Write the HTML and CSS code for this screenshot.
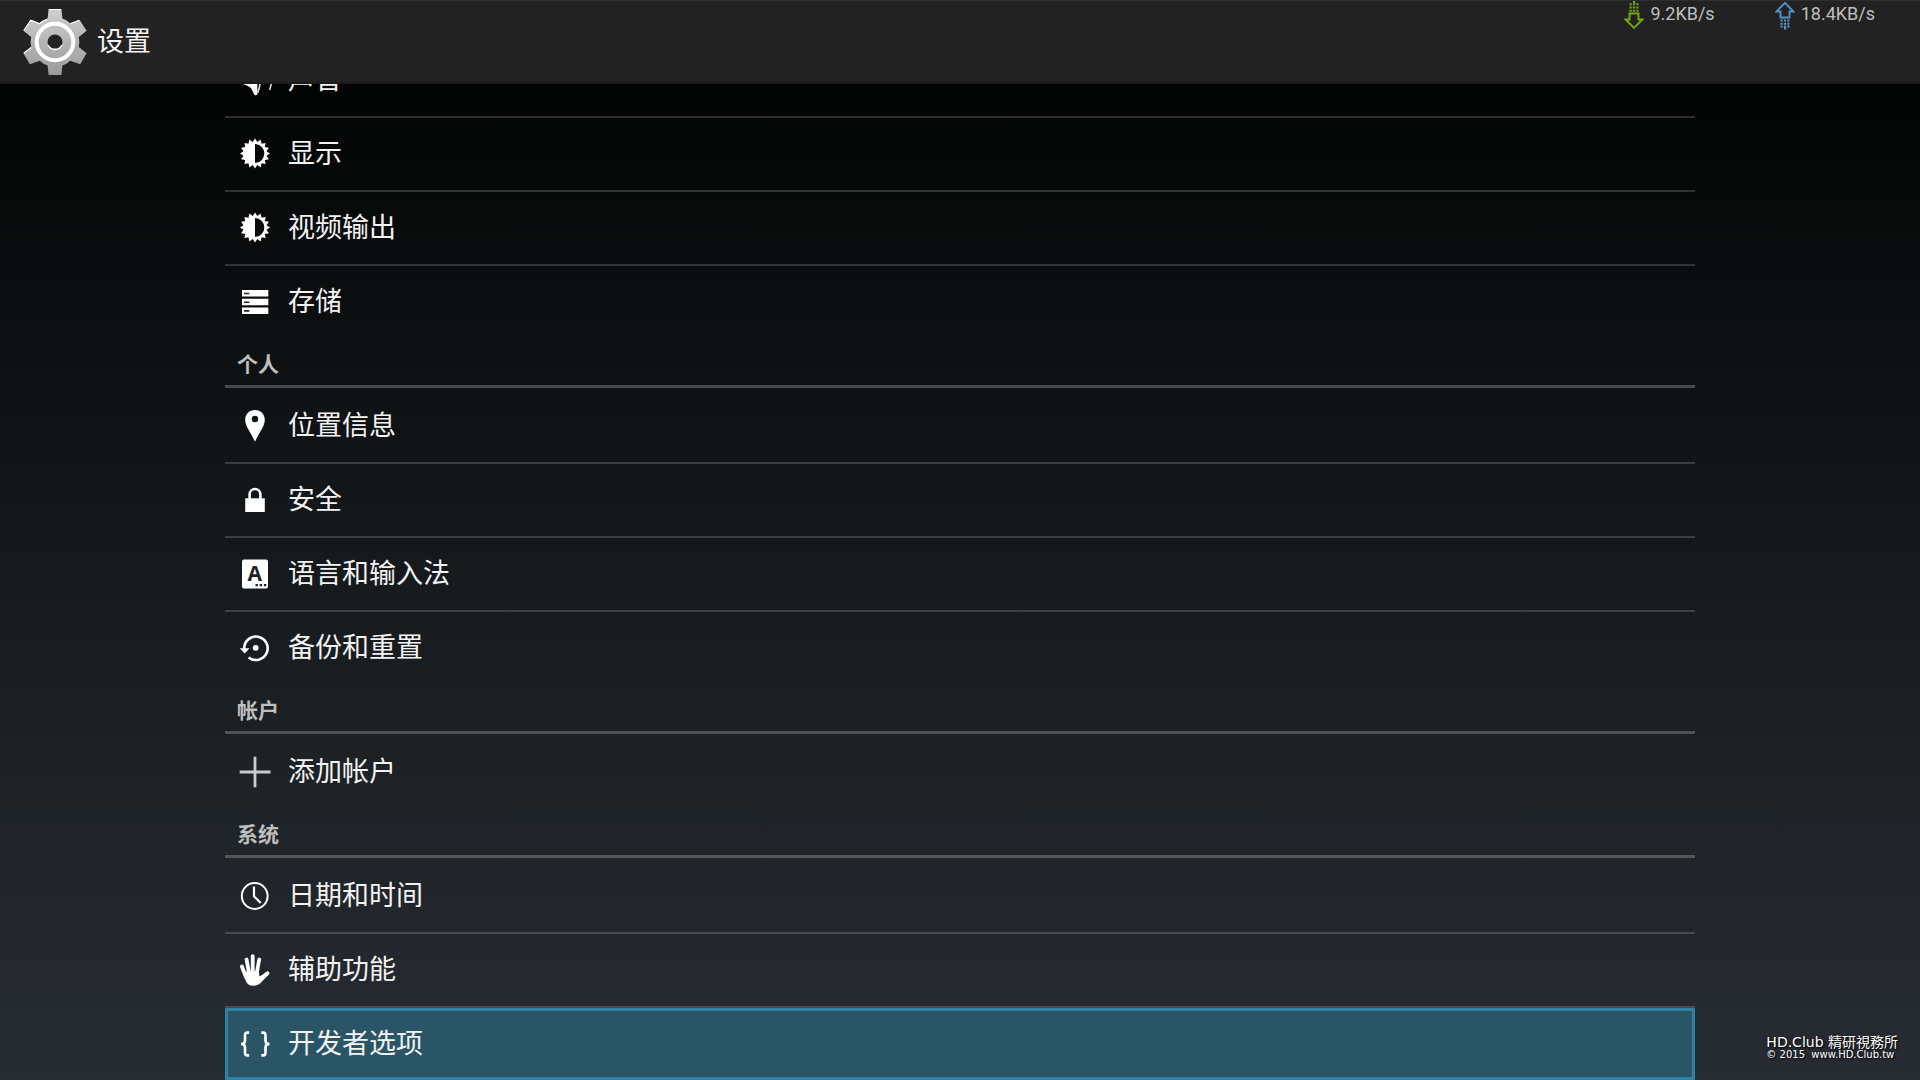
FILE: index.html
```html
<!DOCTYPE html>
<html lang="zh-CN">
<head>
<meta charset="UTF-8">
<title>设置</title>
<link rel="stylesheet" href="styles.css">
</head>
<body>
<svg class="defs" aria-hidden="true">
    <defs>
        <linearGradient id="metal" x1="0" y1="0" x2="0" y2="1">
            <stop offset="0" stop-color="#cfcfcf"/>
            <stop offset="1" stop-color="#9a9a9a"/>
        </linearGradient>
        <symbol id="brightness" viewBox="0 0 32 32">
            <path fill="#fff" fill-rule="evenodd" d="M31 15.500 27.500 17.800 29.900 21.200 25.800 22 26.600 26.100 22.500 25.300 21.700 29.400 18.300 27 16 30.500 13.700 27 10.300 29.400 9.500 25.300 5.400 26.100 6.200 22 2.100 21.200 4.500 17.800 1 15.500 4.500 13.200 2.100 9.800 6.200 9 5.400 4.900 9.500 5.700 10.300 1.600 13.700 4 16 .5 18.300 4 21.700 1.600 22.500 5.700 26.600 4.900 25.800 9 29.900 9.800 27.500 13.200ZM16 6V25A9.300 9.500 0 0 0 16 6Z"/>
        </symbol>
    </defs>
</svg>

<header class="action-bar">
    <svg class="logo" viewBox="0 0 68 68" aria-hidden="true">
        <g fill="url(#metal)">
            <path fill-rule="evenodd" d="M27.6 1H40.4L41.4 10.5Q46 12 49.3 15.2L58.5 11.8 65.6 22.7 57.8 29Q59 34 57.8 39L65.6 45.3 59.2 56.2 49.3 52.8Q46 56 41.4 57.5L40.4 67H27.6L26.6 57.5Q22 56 18.7 52.8L8.8 56.2 2.4 45.3 10.2 39Q9 34 10.2 29L2.4 22.7 9.5 11.8 18.7 15.2Q22 12 26.6 10.5ZM34 26.5A7.5 7.5 0 1 0 34 41.5 7.5 7.5 0 1 0 34 26.5Z"/>
        </g>
        <path d="M28 1.5H40M2.8 22.5 9.8 12.3 18.7 15.7Q21 13 26.6 11.2M49.3 15.7 58.2 12.3M2.8 45.3 10.2 39.5" fill="none" stroke="#fff" stroke-width="1.2"/>
        <circle cx="34" cy="34" r="18.3" fill="none" stroke="#fff" stroke-width="4"/>
        <path d="M27 37A7.8 7.8 0 0 0 41 37" fill="none" stroke="#fff" stroke-width="1.6"/>
    </svg>
    <h1 class="title">设置</h1>
    <div class="speeds">
        <span class="speed">
            <svg class="arrow" viewBox="0 0 20 30" fill="none" stroke="#77a80c" stroke-width="1.9" aria-hidden="true">
                <path d="M5.5 12.5H14.5V18.500H18.5L10 27 1.5 18.5H5.5Z"/>
                <path stroke-width="2" stroke-dasharray="2.200 1.200" d="M5.5 9.800H15M5.5 6.500H15M5.5 3.200H15M9 1H11.500"/>
            </svg>
            9.2KB/s
        </span>
        <span class="speed">
            <svg class="arrow" viewBox="0 0 20 30" fill="none" stroke="#5593c4" stroke-width="1.9" aria-hidden="true">
                <path d="M5.5 16.500H14.5V10.500H18.5L10 1.800 1.5 10.500H5.5Z"/>
                <path stroke-width="2" stroke-dasharray="2.200 1.200" d="M5.5 19.500H15M5.5 22.700H15M5.5 25.500H15M9 27.500H11.500"/>
            </svg>
            18.4KB/s
        </span>
    </div>
</header>

<main class="content">
    <ul class="list">
        <li>
            <a class="item" href="#sound">
                <svg class="icon" viewBox="0 0 32 32" aria-hidden="true">
                    <path fill="#fff" d="M4 20 2 14 9 11 15 2 18 12 18.500 28Q19 32 15.500 31L12 24 8 21.500Z"/>
                    <path fill="none" stroke="#ddd" stroke-width="1.600" d="M18 4Q24 17 18.500 29M31.500 8Q34 17 30.500 26"/>
                </svg>
                声音
            </a>
        </li>
        <li>
            <a class="item" href="#display">
                <svg class="icon" aria-hidden="true"><use href="#brightness"/></svg>
                显示
            </a>
        </li>
        <li>
            <a class="item" href="#video">
                <svg class="icon" aria-hidden="true"><use href="#brightness"/></svg>
                视频输出
            </a>
        </li>
        <li>
            <a class="item" href="#storage">
                <svg class="icon" viewBox="0 0 32 32" aria-hidden="true">
                    <path fill="#fff" d="M3 4H29.3V10.6H3ZM3 12.7H29.3V19.3H3ZM3 21.4H29.3V28H3Z"/>
                    <path stroke="#222" stroke-width="1.6" d="M5 7.5H10.3M5 16.2H10.3M5 24.9H10.3"/>
                </svg>
                存储
            </a>
        </li>
    </ul>

    <h2 class="category">个人</h2>
    <ul class="list">
        <li>
            <a class="item" href="#location">
                <svg class="icon" viewBox="0 0 32 32" aria-hidden="true">
                    <path fill="#fff" fill-rule="evenodd" d="M16 0C10.3 0 6.2 4.2 6.2 9.8 6.2 16.5 12 22.5 16 31.8 20 22.5 25.8 16.5 25.8 9.8 25.8 4.2 21.7 0 16 0ZM16 5.8A3.2 3.2 0 1 1 16 12.2 3.2 3.2 0 1 1 16 5.8Z"/>
                </svg>
                位置信息
            </a>
        </li>
        <li>
            <a class="item" href="#security">
                <svg class="icon" viewBox="0 0 32 32" aria-hidden="true">
                    <path fill="#fff" d="M6.2 14.3H25.8V28H6.2Z"/>
                    <path fill="none" stroke="#fff" stroke-width="2.6" d="M10.6 15V10.4A5.4 5.4 0 0 1 21.4 10.4V15"/>
                </svg>
                安全
            </a>
        </li>
        <li>
            <a class="item" href="#language">
                <svg class="icon" viewBox="0 0 32 32" aria-hidden="true">
                    <rect x="3" y="1.5" width="26" height="29" rx="2" fill="#fff"/>
                    <text class="letter" x="15.7" y="23" text-anchor="middle">A</text>
                    <path stroke="#222" stroke-width="2.2" stroke-dasharray="2.4 1.8" d="M16.5 27.2H28"/>
                </svg>
                语言和输入法
            </a>
        </li>
        <li>
            <a class="item" href="#backup">
                <svg class="icon" viewBox="0 0 32 32" aria-hidden="true">
                    <path fill="none" stroke="#fff" stroke-width="2.6" d="M5.3 17.5A11.7 11.7 0 1 1 9.6 25.4"/>
                    <path fill="#fff" d="M.8 16.3H10.5L5.7 21.4Z"/>
                    <circle cx="16.7" cy="15.8" r="2.9" fill="#fff"/>
                </svg>
                备份和重置
            </a>
        </li>
    </ul>

    <h2 class="category">帐户</h2>
    <ul class="list">
        <li>
            <a class="item" href="#add-account">
                <svg class="icon" viewBox="0 0 32 32" aria-hidden="true">
                    <path stroke="#ccc" stroke-width="2.8" d="M.7 16H31.5M16 .7V31.3"/>
                </svg>
                添加帐户
            </a>
        </li>
    </ul>

    <h2 class="category">系统</h2>
    <ul class="list">
        <li>
            <a class="item" href="#date">
                <svg class="icon" viewBox="0 0 32 32" fill="none" stroke="#fff" aria-hidden="true">
                    <circle cx="15.7" cy="16" r="12.9" stroke-width="2"/>
                    <path stroke-width="2.2" d="M15 6.5V16.2L21.7 23"/>
                </svg>
                日期和时间
            </a>
        </li>
        <li>
            <a class="item" href="#accessibility">
                <svg class="icon" viewBox="0 0 32 32" aria-hidden="true">
                    <path fill="none" stroke="#fff" stroke-width="3.8" stroke-linecap="round" d="M2.9 12.5 7 23M7.6 5.5 10 19M13.7 2.2V19M20.2 5.5 17.8 19M28.5 19.3 20.5 26"/>
                    <path fill="#fff" d="M5 21 8 17H19.7L20.5 22.5 28 18 29.5 21C24 25 22 31.8 14 31.8 8 31.8 6.5 27 5 21Z"/>
                </svg>
                辅助功能
            </a>
        </li>
        <li>
            <a class="item selected" href="#developer">
                <svg class="icon" viewBox="0 0 32 32" fill="none" stroke="#fff" stroke-width="2.6" aria-hidden="true">
                    <path d="M10.2 4.6H8.5Q6 4.6 6 7.2V12.5Q6 16 2 16 6 16 6 19.5V24.8Q6 27.4 8.5 27.4H10.2"/>
                    <path d="M22.3 4.6H24Q26.5 4.6 26.5 7.2V12.5Q26.5 16 30.5 16 26.5 16 26.5 19.5V24.8Q26.5 27.4 24 27.4H22.3"/>
                </svg>
                开发者选项
            </a>
        </li>
    </ul>
</main>

<div class="watermark">
    <div class="site" lang="zh-TW">HD.Club 精研視務所</div>
    <div class="copyright">© 2015&nbsp; www.HD.Club.tw</div>
</div>
</body>
</html>
```

FILE: styles.css
```css
* {
    box-sizing: border-box;
}
body {
    margin: 0;
    height: 100vh;
    display: flex;
    flex-direction: column;
    overflow: hidden;
    background: linear-gradient(#020303 6%, #111416 40%, #1f2428 76%, #272b33);
    color: #f3f3f3;
    font-family: Roboto, "Noto Sans CJK SC", sans-serif;
}
.defs {
    position: absolute;
    width: 0;
    height: 0;
}

/* Action bar */
.action-bar {
    display: flex;
    align-items: center;
    flex: none;
    height: 84px;
    padding: 0 45px 0 21px;
    background-color: #222;
    border-top: 1px solid #2e2e2e;
    border-bottom: 2px solid #1b1b1b;
}
.logo {
    width: 68px;
    height: 68px;
}
.title {
    margin: 0 0 0 8px;
    font-size: 27px;
    font-weight: 400;
    line-height: 40px;
}
.speeds {
    display: flex;
    align-self: flex-start;
    gap: 60px;
    margin-left: auto;
}
.speed {
    display: flex;
    align-items: flex-start;
    gap: 6px;
    color: #bebebe;
    font-size: 18px;
    line-height: 26px;
}
.arrow {
    width: 20px;
    height: 30px;
}

/* Settings list, scrolled to its end */
.content {
    display: flex;
    flex-direction: column;
    justify-content: flex-end;
    flex: 1;
    min-height: 0;
    padding: 0 225px;
    overflow: hidden;
}
.list {
    flex: none;
    margin: 0;
    padding: 0;
    list-style: none;
}
.list li + li {
    border-top: 2px solid rgba(255, 255, 255, 0.17);
}
.item {
    display: flex;
    align-items: center;
    gap: 17px;
    height: 72px;
    padding: 0 14px;
    color: inherit;
    font-size: 27px;
    line-height: 40px;
    text-decoration: none;
}
.icon {
    flex: none;
    width: 32px;
    height: 32px;
    overflow: visible;
}
.letter {
    fill: #222;
    font: bold 21px "Open Sans", sans-serif;
}
.selected {
    background-color: #2a5567;
    box-shadow: inset 0 0 0 3px #2f82a3;
}
.category {
    flex: none;
    height: 50px;
    margin: 0 0 2px;
    padding: 11px 12px 0;
    border-bottom: 3px solid rgba(255, 255, 255, 0.23);
    color: #bebebe;
    font-size: 21px;
    font-weight: 700;
    line-height: 32px;
}

.watermark {
    position: absolute;
    right: 22px;
    bottom: 20px;
    color: #fff;
    text-shadow: 1px 1px 2px #000;
}
.site {
    font: 14px/16px "DejaVu Sans", "Noto Sans CJK TC", sans-serif;
}
.copyright {
    font: 10px/10px "DejaVu Sans", sans-serif;
}
```
